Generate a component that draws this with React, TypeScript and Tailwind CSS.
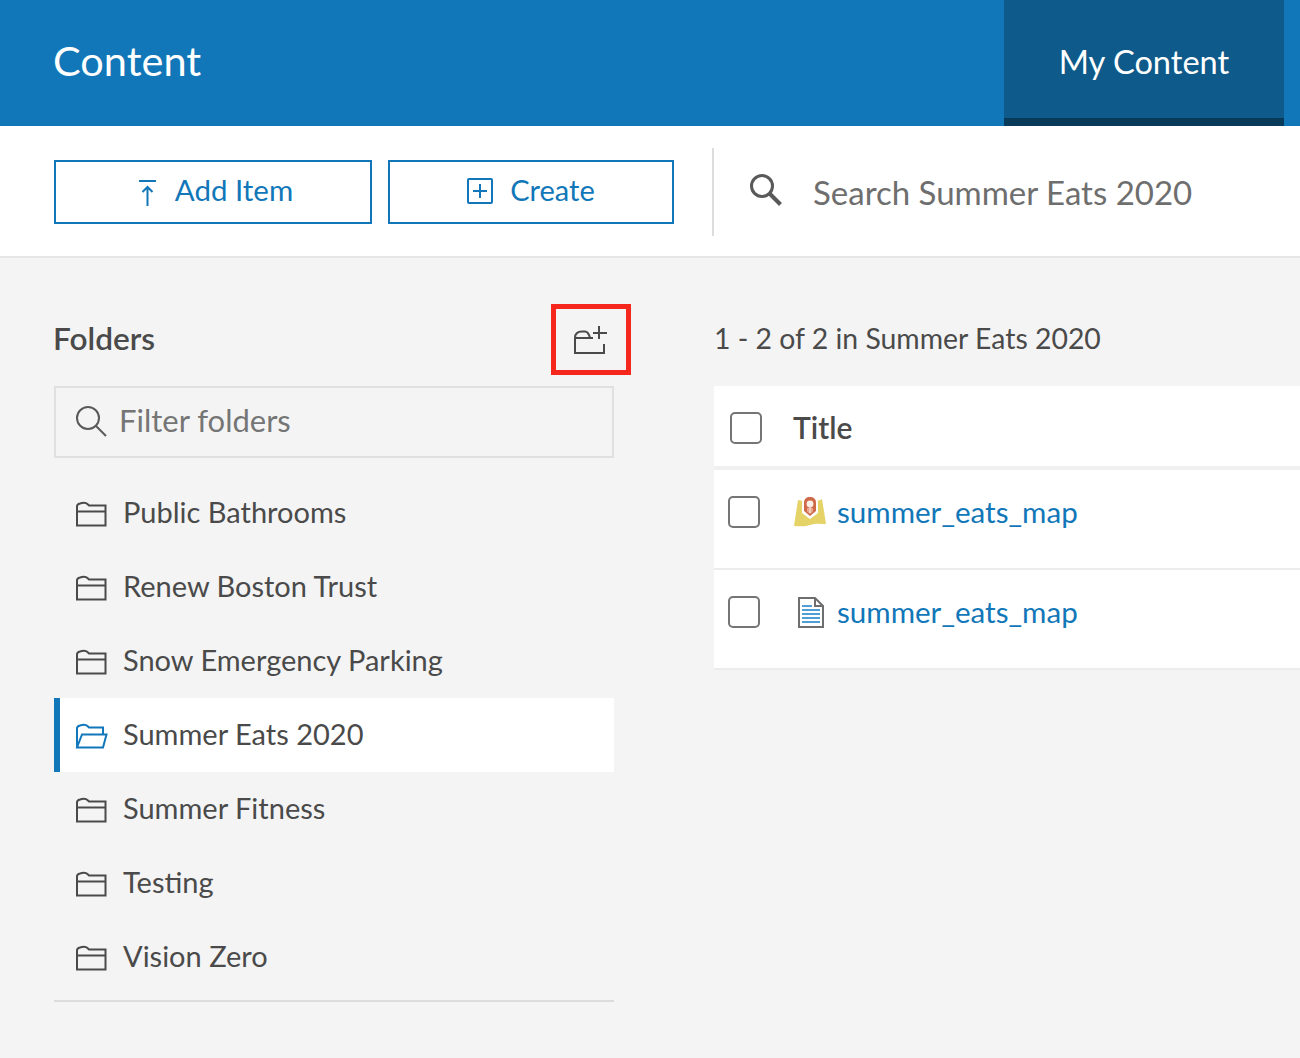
const folders = [
  'Public Bathrooms',
  'Renew Boston Trust',
  'Snow Emergency Parking',
  'Summer Eats 2020',
  'Summer Fitness',
  'Testing',
  'Vision Zero',
];

const FONT = "font-['Lato','Open_Sans',sans-serif]";

function FolderIcon() {
  return (
    <svg width="32" height="26" viewBox="0 0 32 26" fill="none" stroke="#4a4a4a" strokeWidth="2" className="shrink-0 mt-1">
      <path d="M2 24.5V5.5C2 4 3 3 5 2.5C8 1.5 11 1.5 13 3.5L14 4.5H30.5V24.5Z" />
      <path d="M2 10.5H30.5" />
    </svg>
  );
}

function OpenFolderIcon() {
  return (
    <svg width="33" height="26" viewBox="0 0 33 26" fill="none" stroke="#1177bb" strokeWidth="2" className="shrink-0 mt-1 -mr-px">
      <path d="M2 24.5V5.5C2 4 3 3 5 2.5C8 1.5 11 1.5 13 3.5L14 4.5H28V11" />
      <path d="M2 24.5L7 11.5H31.5L28 24.5Z" />
    </svg>
  );
}

function NewFolderIcon() {
  return (
    <svg width="33" height="28" viewBox="0 0 33 28" fill="none" stroke="#4a4a4a" strokeWidth="2">
      <path d="M1 12H19" />
      <path d="M1 28V12C1 7 4 5.5 8 5.5H11C14 5.5 15 8 16 12" />
      <path d="M1 27H30V18" />
      <path d="M25 0V13M19 7H33" />
    </svg>
  );
}

function SearchIcon() {
  return (
    <svg width="34" height="34" viewBox="0 0 34 34" fill="none" stroke="#595959" className="ml-[35px] -mt-1 shrink-0">
      <circle cx="13" cy="13" r="10.5" strokeWidth="3" />
      <path d="M20.5 20.5L31.5 31.5" strokeWidth="4" />
    </svg>
  );
}

function FilterIcon() {
  return (
    <svg width="32" height="32" viewBox="0 0 32 32" fill="none" stroke="#595959" strokeWidth="2" className="shrink-0">
      <circle cx="13" cy="12" r="11" />
      <path d="M21 20L31 30" />
    </svg>
  );
}

function MapIcon() {
  return (
    <svg width="32" height="30" viewBox="0 0 32 30">
      <path d="M4 3C7 4 9 4 12 3L20 3C23 4 25 4 28 2L32 27C27 27 22 26 16 28C11 30 5 29 0 29Z" fill="#e6d368" />
      <path d="M16 -1C20.5 -1 24 1.5 24 6V16L16 22L8 16V6C8 1.5 11.5 -1 16 -1Z" fill="#fff" />
      <path d="M16 0C19.5 0 22 2 22 5.5V14L16 19L10 14V5.5C10 2 12.5 0 16 0Z" fill="#cf6a48" />
      <path d="M13 11H19V14.5L16 17L13 14.5Z" fill="#e9a58c" />
      <circle cx="16" cy="7" r="3.4" fill="#fbeee8" />
      <path d="M16 9V16" stroke="#f5d6ca" strokeWidth="1.5" />
    </svg>
  );
}

function DocIcon() {
  return (
    <svg width="28" height="33" viewBox="0 0 28 33" fill="none">
      <path d="M2 2H18L26 10V31H2Z" fill="#fff" stroke="#6e6e6e" strokeWidth="2" />
      <path d="M18 2V10H26" stroke="#6e6e6e" strokeWidth="2" />
      <path d="M5 10H15M5 14H23M5 18H23M5 22H23M5 26H23" stroke="#4f9fd6" strokeWidth="2" />
    </svg>
  );
}

function Checkbox() {
  return <div className="w-8 h-8 rounded-[5px] border-2 border-[#757575] bg-white shrink-0" />;
}

export default function App() {
  return (
    <div className={`${FONT} w-[1300px] h-[1058px] overflow-hidden bg-[#f4f4f4] flex flex-col`}>
      {/* Top banner */}
      <div className="h-[126px] bg-[#1177b8] flex justify-between pl-[53px] pr-4">
        <h1 className="text-[41.5px] text-white self-center font-normal leading-none pb-1">Content</h1>
        <div className="w-[280px] bg-[#0e5a8a] border-b-8 border-[#0a3a5a] flex items-center justify-center text-[32.6px] text-white pt-[6px]">
          My Content
        </div>
      </div>

      {/* Toolbar */}
      <div className="h-[132px] bg-white border-b-2 border-[#e6e6e6] flex items-center pl-[54px] pt-0.5">
        <button className="w-[318px] h-16 border-2 border-[#1177b8] flex items-center justify-center gap-[18px] text-[29.5px] text-[#1177b8] pb-1 pl-1">
          <svg width="20" height="28" viewBox="0 0 20 28" fill="none" stroke="#1177b8" strokeWidth="2" className="mt-[6px]">
            <path d="M2 2H19M10.5 27V8M5.5 13L10.5 8L15.5 13" />
          </svg>
          Add Item
        </button>
        <button className="w-[286px] h-16 ml-4 border-2 border-[#1177b8] flex items-center justify-center gap-[17px] text-[29px] text-[#1177b8] pb-1">
          <svg width="26" height="26" viewBox="0 0 26 26" fill="none" stroke="#1177b8" strokeWidth="2" className="mt-0.5">
            <rect x="1" y="1" width="24" height="24" rx="1" />
            <path d="M13 6V20M6 13H20" />
          </svg>
          Create
        </button>
        <div className="w-0.5 h-[88px] bg-[#dcdcdc] ml-[38px]" />
        <SearchIcon />
        <span className="ml-[30px] text-[33px] text-[#6e6e6e] pt-0.5">Search Summer Eats 2020</span>
      </div>

      {/* Body */}
      <div className="flex flex-1 pl-[54px]">
        <div className="w-[560px] pt-[46px]">
          <div className="h-[72px] flex items-center justify-between">
            <span className="text-[31.6px] font-semibold text-[#4a4a4a] -ml-px pb-0.5">Folders</span>
            <div className="w-20 h-[71px] self-start -mr-[17px] border-[5px] border-[#f5261c] flex items-center justify-center pr-0.5">
              <NewFolderIcon />
            </div>
          </div>
          <div className="mt-2.5 h-[72px] border-2 border-[#e0e0e0] flex items-center pl-[19px] gap-[12px]">
            <FilterIcon />
            <span className="text-[31px] text-[#757575] pb-1">Filter folders</span>
          </div>
          <div className="mt-[18px] border-b-2 border-[#dcdcdc] pb-[6px]">
            {folders.map((name) => {
              const active = name === 'Summer Eats 2020';
              return (
                <div
                  key={name}
                  className={
                    active
                      ? 'h-[74px] flex items-center gap-4 bg-white border-l-[6px] border-[#1177b8] pl-[15px] pb-0.5 text-[29px] text-[#4a4a4a]'
                      : 'h-[74px] flex items-center gap-4 pl-[21px] pb-0.5 text-[29px] text-[#4a4a4a]'
                  }
                >
                  {active ? <OpenFolderIcon /> : <FolderIcon />}
                  {name}
                </div>
              );
            })}
          </div>
        </div>

        <div className="flex-1 ml-[100px] pt-[46px]">
          <div className="h-[72px] flex items-center text-[28.4px] text-[#4a4a4a] -mt-[2px]">1 - 2 of 2 in Summer Eats 2020</div>
          <div className="mt-3 bg-white">
            <div className="h-[84px] border-b-4 border-[#f0f0f0] flex items-center pl-4 gap-[31px]">
              <div className="mt-1"><Checkbox /></div>
              <span className="text-[30px] font-semibold text-[#4a4a4a] mt-0.5">Title</span>
            </div>
            <div className="h-[100px] border-b-2 border-[#ececec] flex items-center pl-[14px] text-[29.6px] text-[#1177b8] pb-[14px]">
              <Checkbox />
              <div className="ml-[34px] mr-[11px]"><MapIcon /></div>
              summer_eats_map
            </div>
            <div className="h-[100px] border-b-2 border-[#ececec] flex items-center pl-[14px] text-[29.6px] text-[#1177b8] pb-[14px]">
              <Checkbox />
              <div className="ml-[37px] mr-[12px]"><DocIcon /></div>
              summer_eats_map
            </div>
          </div>
        </div>
      </div>
    </div>
  );
}
